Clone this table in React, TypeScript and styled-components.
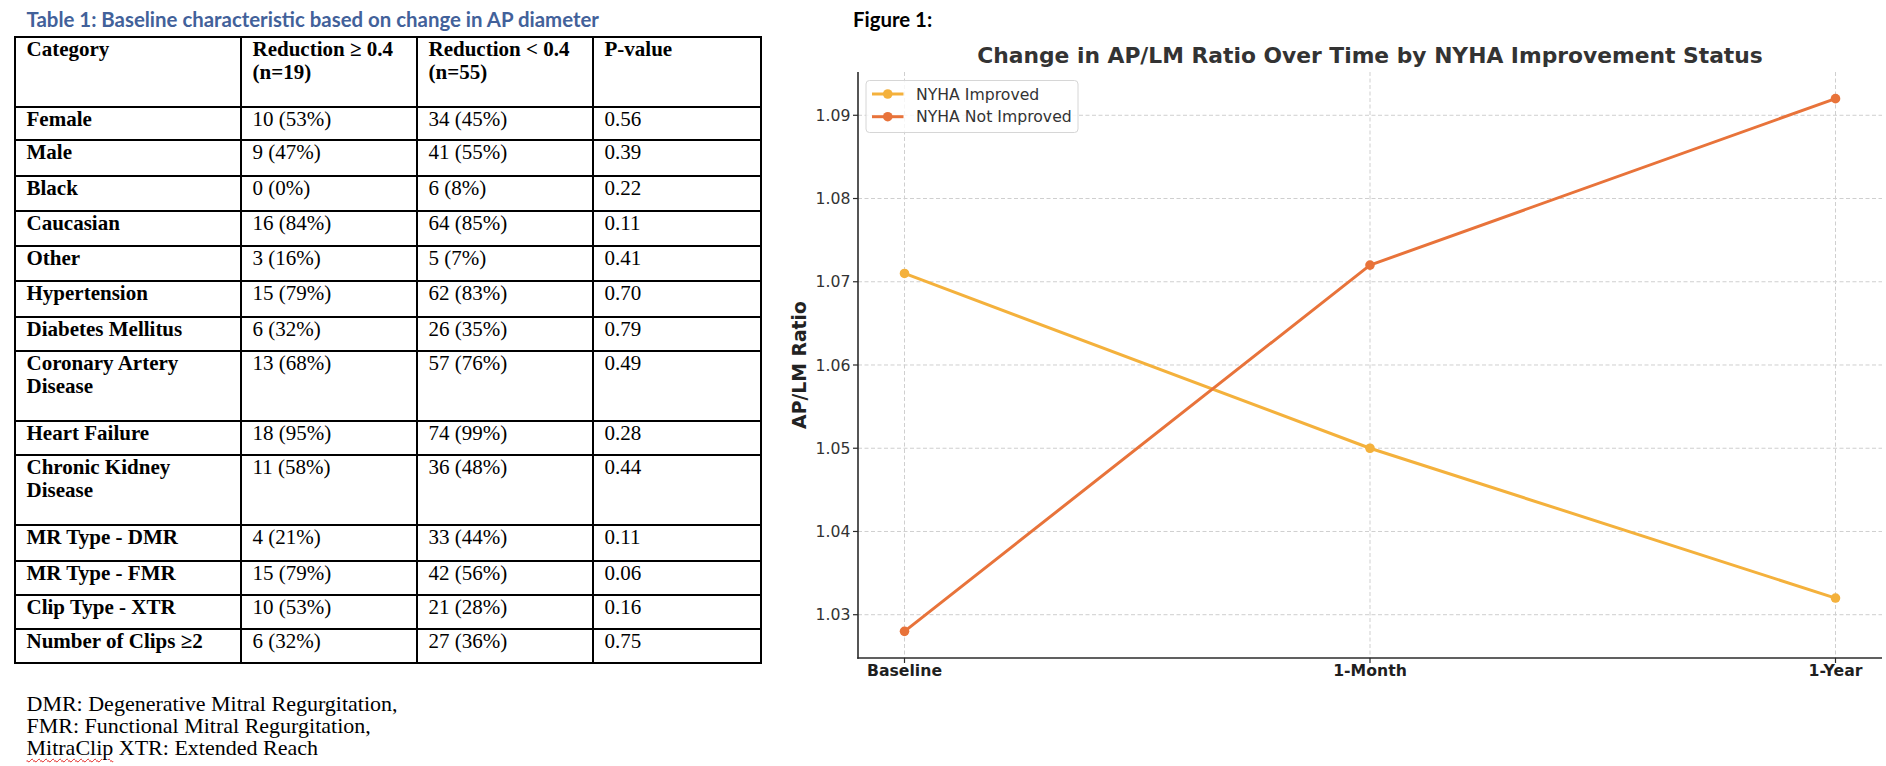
import React from "react";
import styled, { createGlobalStyle } from "styled-components";

const GlobalStyle = createGlobalStyle`
  html, body { margin: 0; padding: 0; background: #ffffff; }
  body { width: 1886px; height: 766px; overflow: hidden; }
`;

const Page = styled.main`
  display: flex;
  width: 1886px;
  height: 766px;
`;

const TablePane = styled.section`
  width: 780px;
  flex: none;
  box-sizing: border-box;
  padding-left: 14px;
  display: flex;
  flex-direction: column;
`;

const FigurePane = styled.section`
  flex: 1;
  display: flex;
  flex-direction: column;
`;

const Caption = styled.h2<{ $color: string; $indent: number }>`
  margin: 0;
  height: 36px;
  box-sizing: border-box;
  padding: 6.5px 0 0 ${(p) => p.$indent}px;
  font-family: Lato, "Open Sans", sans-serif;
  font-weight: 700;
  font-size: 20.4px;
  line-height: 24px;
  color: ${(p) => p.$color};
  white-space: nowrap;
`;

const DataTable = styled.div`
  display: flex;
  flex-direction: column;
  width: max-content;
  border-top: 2px solid #000;
  border-left: 2px solid #000;
`;

const Row = styled.div<{ $h: number }>`
  display: grid;
  grid-template-columns: 226px 176px 176px 168px;
  height: ${(p) => p.$h}px;
  box-sizing: border-box;
  border-bottom: 2px solid #000;
`;

const Cell = styled.div<{ $bold?: boolean }>`
  border-right: 2px solid #000;
  padding: 0 8px 0 10.5px;
  font-family: "Liberation Serif", "Times New Roman", serif;
  font-size: 21px;
  line-height: 23px;
  font-weight: ${(p) => (p.$bold ? 700 : 400)};
  color: #000;
  overflow: hidden;
`;

const Note = styled.div`
  margin-top: 29px;
  padding-left: 12.5px;
  font-family: "Liberation Serif", "Times New Roman", serif;
  font-size: 22px;
  line-height: 22px;
  color: #000;
`;

const NoteLine = styled.div`
  white-space: nowrap;
`;

const Misspelt = styled.span`
  text-decoration: underline wavy #e0201b;
  text-decoration-thickness: 1px;
  text-underline-offset: 3px;
`;

const ChartSvg = styled.svg`
  display: block;
`;

const ChartTitle = styled.text`
  font-family: "DejaVu Sans", sans-serif;
  font-weight: 700;
  font-size: 21.8px;
  fill: #333333;
`;

const TickLabel = styled.text<{ $bold?: boolean }>`
  font-family: "DejaVu Sans", sans-serif;
  font-weight: ${(p) => (p.$bold ? 700 : 400)};
  font-size: 15.7px;
  fill: ${(p) => (p.$bold ? "#1f1f1f" : "#333333")};
`;

const AxisLabel = styled.text`
  font-family: "DejaVu Sans", sans-serif;
  font-weight: 700;
  font-size: 18.8px;
  fill: #222222;
`;

const LegendText = styled.text`
  font-family: "DejaVu Sans", sans-serif;
  font-size: 15.7px;
  fill: #333333;
`;

type TRow = { h: number; cat: string[]; a: string[]; b: string[]; p: string };

const header: TRow = {
  h: 70,
  cat: ["Category"],
  a: ["Reduction \u2265 0.4", "(n=19)"],
  b: ["Reduction < 0.4", "(n=55)"],
  p: "P-value",
};

const rows: TRow[] = [
  { h: 33, cat: ["Female"], a: ["10 (53%)"], b: ["34 (45%)"], p: "0.56" },
  { h: 36, cat: ["Male"], a: ["9 (47%)"], b: ["41 (55%)"], p: "0.39" },
  { h: 35, cat: ["Black"], a: ["0 (0%)"], b: ["6 (8%)"], p: "0.22" },
  { h: 35, cat: ["Caucasian"], a: ["16 (84%)"], b: ["64 (85%)"], p: "0.11" },
  { h: 35, cat: ["Other"], a: ["3 (16%)"], b: ["5 (7%)"], p: "0.41" },
  { h: 36, cat: ["Hypertension"], a: ["15 (79%)"], b: ["62 (83%)"], p: "0.70" },
  { h: 34, cat: ["Diabetes Mellitus"], a: ["6 (32%)"], b: ["26 (35%)"], p: "0.79" },
  { h: 70, cat: ["Coronary Artery", "Disease"], a: ["13 (68%)"], b: ["57 (76%)"], p: "0.49" },
  { h: 34, cat: ["Heart Failure"], a: ["18 (95%)"], b: ["74 (99%)"], p: "0.28" },
  { h: 70, cat: ["Chronic Kidney", "Disease"], a: ["11 (58%)"], b: ["36 (48%)"], p: "0.44" },
  { h: 36, cat: ["MR Type - DMR"], a: ["4 (21%)"], b: ["33 (44%)"], p: "0.11" },
  { h: 34, cat: ["MR Type - FMR"], a: ["15 (79%)"], b: ["42 (56%)"], p: "0.06" },
  { h: 34, cat: ["Clip Type - XTR"], a: ["10 (53%)"], b: ["21 (28%)"], p: "0.16" },
  { h: 34, cat: ["Number of Clips \u22652"], a: ["6 (32%)"], b: ["27 (36%)"], p: "0.75" },
];

const Lines = ({ lines }: { lines: string[] }) => (
  <>
    {lines.map((l, i) => (
      <div key={i}>{l}</div>
    ))}
  </>
);

/* chart geometry (page coordinates) */
const AX_L = 858;
const AX_R = 1882;
const AX_T = 72;
const AX_B = 658;
const yOf = (v: number) => AX_B - (v - 1.0248) * 8324;
const XS = [904.5, 1370, 1835.5];
const XLABELS = ["Baseline", "1-Month", "1-Year"];
const YTICKS = [1.03, 1.04, 1.05, 1.06, 1.07, 1.08, 1.09];

const series = [
  { name: "NYHA Improved", color: "#f4b13c", values: [1.071, 1.05, 1.032] },
  { name: "NYHA Not Improved", color: "#e8733a", values: [1.028, 1.072, 1.092] },
];

const Chart = () => (
  <ChartSvg width={1106} height={730} viewBox="780 36 1106 730">
    <ChartTitle x={1370} y={63} textAnchor="middle">
      Change in AP/LM Ratio Over Time by NYHA Improvement Status
    </ChartTitle>

    {YTICKS.map((v) => (
      <line key={`gy${v}`} x1={AX_L} x2={AX_R} y1={yOf(v)} y2={yOf(v)} stroke="#cfcfcf" strokeWidth={1} strokeDasharray="4 2.5" />
    ))}
    {XS.map((x) => (
      <line key={`gx${x}`} x1={x} x2={x} y1={AX_T} y2={AX_B} stroke="#cfcfcf" strokeWidth={1} strokeDasharray="4 2.5" />
    ))}

    <line x1={AX_L} x2={AX_L} y1={AX_T} y2={AX_B + 0.8} stroke="#2b2b2b" strokeWidth={1.6} />
    <line x1={AX_L - 0.8} x2={AX_R} y1={AX_B} y2={AX_B} stroke="#2b2b2b" strokeWidth={1.6} />

    {YTICKS.map((v) => (
      <g key={`ty${v}`}>
        <line x1={AX_L - 5} x2={AX_L} y1={yOf(v)} y2={yOf(v)} stroke="#2b2b2b" strokeWidth={1.2} />
        <TickLabel x={AX_L - 7.5} y={yOf(v) + 5.7} textAnchor="end">
          {v.toFixed(2)}
        </TickLabel>
      </g>
    ))}
    {XS.map((x, i) => (
      <g key={`tx${x}`}>
        <line x1={x} x2={x} y1={AX_B} y2={AX_B + 5} stroke="#2b2b2b" strokeWidth={1.2} />
        <TickLabel $bold x={x} y={675.5} textAnchor="middle">
          {XLABELS[i]}
        </TickLabel>
      </g>
    ))}

    <AxisLabel x={806} y={365} textAnchor="middle" transform="rotate(-90 806 365)">
      AP/LM Ratio
    </AxisLabel>

    {series.map((s) => (
      <g key={s.name}>
        <polyline
          points={s.values.map((v, i) => `${XS[i]},${yOf(v)}`).join(" ")}
          fill="none"
          stroke={s.color}
          strokeWidth={3}
          strokeLinejoin="round"
        />
        {s.values.map((v, i) => (
          <circle key={i} cx={XS[i]} cy={yOf(v)} r={4.8} fill={s.color} />
        ))}
      </g>
    ))}

    <rect x={866} y={80.5} width={212} height={52} rx={3.5} fill="#ffffff" fillOpacity={0.8} stroke="#d6d6d6" strokeWidth={1} />
    {series.map((s, i) => {
      const y = 94 + i * 22.7;
      return (
        <g key={`lg${s.name}`}>
          <line x1={872} x2={903.5} y1={y} y2={y} stroke={s.color} strokeWidth={3} />
          <circle cx={887.75} cy={y} r={4.8} fill={s.color} />
          <LegendText x={916} y={y + 5.6}>
            {s.name}
          </LegendText>
        </g>
      );
    })}
  </ChartSvg>
);

export default function App() {
  return (
    <>
      <GlobalStyle />
      <Page>
        <TablePane>
          <Caption $color="#42619a" $indent={12.5}>
            Table 1: Baseline characteristic based on change in AP diameter
          </Caption>
          <DataTable>
            <Row $h={header.h}>
              <Cell $bold><Lines lines={header.cat} /></Cell>
              <Cell $bold><Lines lines={header.a} /></Cell>
              <Cell $bold><Lines lines={header.b} /></Cell>
              <Cell $bold>{header.p}</Cell>
            </Row>
            {rows.map((r) => (
              <Row key={r.cat.join(" ")} $h={r.h}>
                <Cell $bold><Lines lines={r.cat} /></Cell>
                <Cell><Lines lines={r.a} /></Cell>
                <Cell><Lines lines={r.b} /></Cell>
                <Cell>{r.p}</Cell>
              </Row>
            ))}
          </DataTable>
          <Note>
            <NoteLine>DMR: Degenerative Mitral Regurgitation,</NoteLine>
            <NoteLine>FMR: Functional Mitral Regurgitation,</NoteLine>
            <NoteLine>
              <Misspelt>MitraClip</Misspelt> XTR: Extended Reach
            </NoteLine>
          </Note>
        </TablePane>
        <FigurePane>
          <Caption $color="#000000" $indent={73}>
            Figure 1:
          </Caption>
          <Chart />
        </FigurePane>
      </Page>
    </>
  );
}
